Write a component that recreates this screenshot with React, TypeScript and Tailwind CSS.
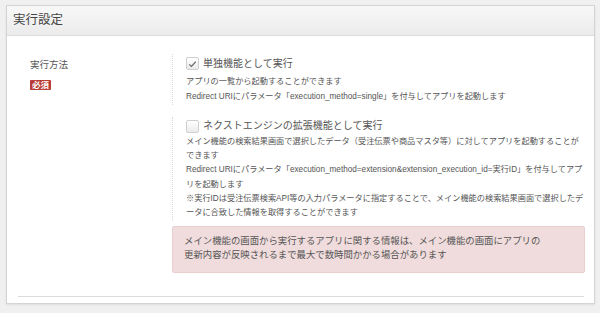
import React from "react";

const jp = { fontFamily: '"Liberation Sans", "Noto Sans CJK JP", sans-serif' };

function Check({ checked }: { checked: boolean }) {
  return (
    <div className="w-[13px] h-[13px] rounded-[2px] border border-[#cfcfcf] bg-gradient-to-b from-[#ffffff] to-[#ebebeb] flex items-center justify-center shrink-0">
      {checked && (
        <svg width="9" height="8" viewBox="0 0 9 8">
          <path d="M1.2 4.4 L3.4 6.4 L7.8 1.6" fill="none" stroke="#666" strokeWidth="1.2" />
        </svg>
      )}
    </div>
  );
}

export default function App() {
  return (
    <div className="w-[600px] h-[313px] bg-[#f0f0f0] pt-[5px] pl-[6px] pr-[5px] overflow-hidden" style={jp}>
      <div className="h-[299px] bg-white border border-[#d4d4d4] shadow-[0_1px_2px_rgba(0,0,0,0.08)] flex flex-col">
        <div className="h-[30px] bg-gradient-to-b from-[#f8f8f8] to-[#ebebeb] border-b border-[#dcdcdc] flex items-center pl-[6px]">
          <span className="text-[12.5px] text-[#444] leading-none">実行設定</span>
        </div>
        <div className="flex pt-[18px]">
          <div className="w-[165px] pl-[23px] pt-[5px] shrink-0">
            <div className="text-[9.5px] text-[#555] leading-[12px]">実行方法</div>
            <div className="mt-[5px] inline-flex items-center justify-center h-[10px] w-[21px] bg-[#b83c36] text-white text-[8.5px] leading-none font-bold rounded-[1px]">
              必須
            </div>
          </div>
          <div className="w-[413px] shrink-0 min-w-0">
            <div className="border-l border-dotted border-[#d8d8d8] pl-[13px] pb-[1px]">
              <div className="h-[17px] flex items-center gap-[4px] pt-[2px]">
                <Check checked />
                <span className="text-[10px] text-[#555] leading-none">単独機能として実行</span>
              </div>
              <div className="pt-[4px] text-[8.2px] text-[#555] leading-[14.5px] whitespace-nowrap">
                <div>アプリの一覧から起動することができます</div>
                <div>Redirect URIにパラメータ「execution_method=single」を付与してアプリを起動します</div>
              </div>
            </div>
            <div className="mt-[12px] border-l border-dotted border-[#d8d8d8] pl-[13px] pb-[1px]">
              <div className="h-[17px] flex items-center gap-[4px] pt-[1px]">
                <Check checked={false} />
                <span className="text-[10px] text-[#555] leading-none">ネクストエンジンの拡張機能として実行</span>
              </div>
              <div className="pt-[1px] text-[8.2px] text-[#555] leading-[14.2px] whitespace-nowrap">
                <div>メイン機能の検索結果画面で選択したデータ（受注伝票や商品マスタ等）に対してアプリを起動することが</div>
                <div>できます</div>
                <div>Redirect URIにパラメータ「execution_method=extension&amp;extension_execution_id=実行ID」を付与してアプ</div>
                <div>リを起動します</div>
                <div>※実行IDは受注伝票検索API等の入力パラメータに指定することで、メイン機能の検索結果画面で選択したデ</div>
                <div>ータに合致した情報を取得することができます</div>
              </div>
            </div>
            <div className="mt-[5px] h-[47px] bg-[#f0dcdc] border border-[#e8d0d0] rounded-[2px] pl-[11px] pt-[7px] text-[9.4px] text-[#555] leading-[14px] whitespace-nowrap">
              <div>メイン機能の画面から実行するアプリに関する情報は、メイン機能の画面にアプリの</div>
              <div>更新内容が反映されるまで最大で数時間かかる場合があります</div>
            </div>
          </div>
        </div>
        <div className="mt-auto mb-[6px] ml-[11px] mr-[10px] border-t border-[#dcdcdc]" />
      </div>
    </div>
  );
}
